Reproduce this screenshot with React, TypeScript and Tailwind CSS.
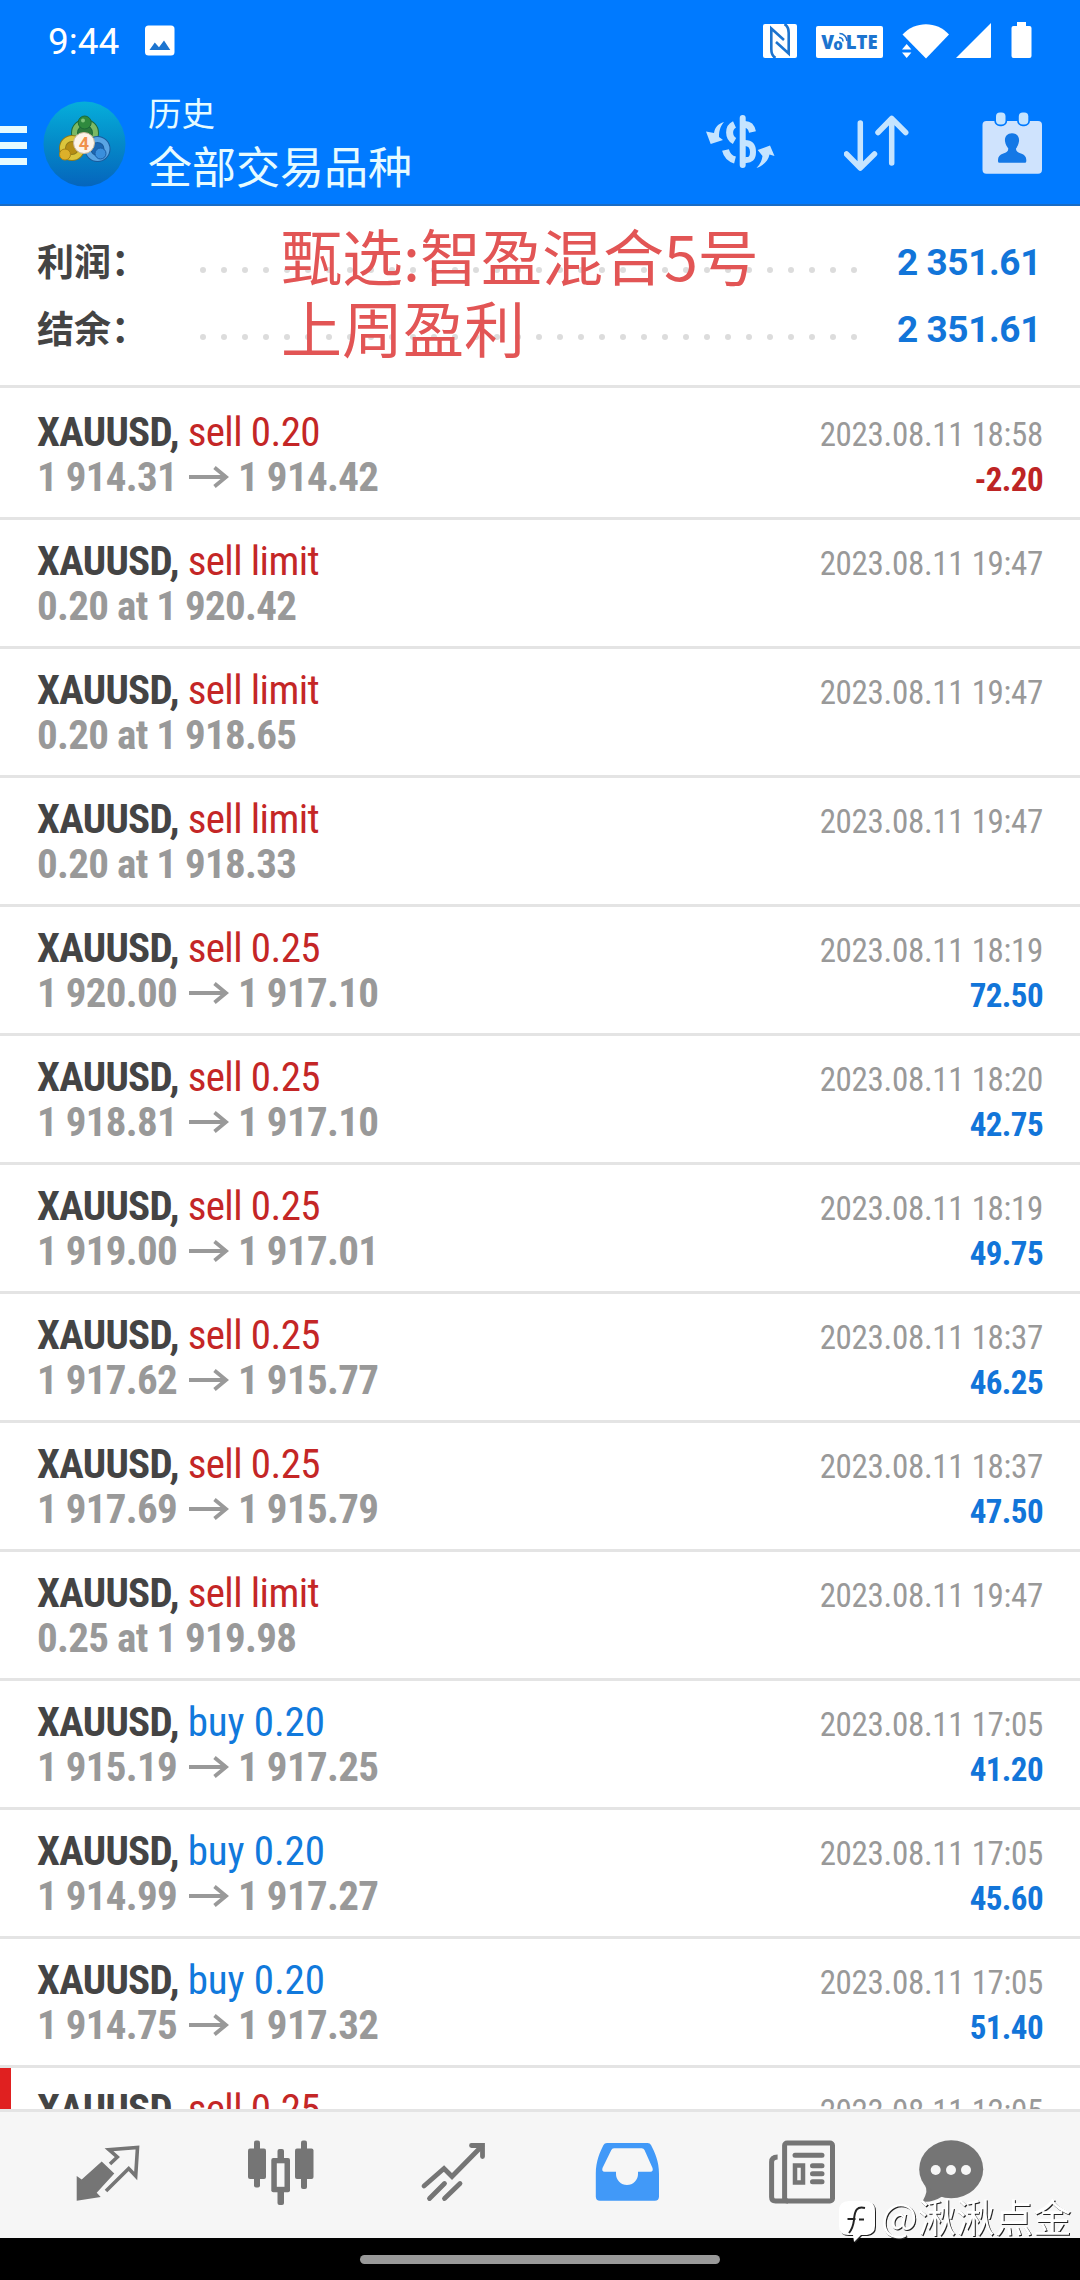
import { clsx } from 'clsx';

// ─── Data ─────────────────────────────────────────────────────────────────────
interface Deal {
  side: 'sell' | 'buy';
  volume: string;
  time: string;
  open?: string;
  close?: string;
  pending?: string;
  profit?: string;
  flagged?: boolean;
}

const DEALS: Deal[] = [
  { side: 'sell', volume: '0.20', open: '1 914.31', close: '1 914.42', time: '18:58', profit: '-2.20' },
  { side: 'sell', volume: 'limit', pending: '0.20 at 1 920.42', time: '19:47' },
  { side: 'sell', volume: 'limit', pending: '0.20 at 1 918.65', time: '19:47' },
  { side: 'sell', volume: 'limit', pending: '0.20 at 1 918.33', time: '19:47' },
  { side: 'sell', volume: '0.25', open: '1 920.00', close: '1 917.10', time: '18:19', profit: '72.50' },
  { side: 'sell', volume: '0.25', open: '1 918.81', close: '1 917.10', time: '18:20', profit: '42.75' },
  { side: 'sell', volume: '0.25', open: '1 919.00', close: '1 917.01', time: '18:19', profit: '49.75' },
  { side: 'sell', volume: '0.25', open: '1 917.62', close: '1 915.77', time: '18:37', profit: '46.25' },
  { side: 'sell', volume: '0.25', open: '1 917.69', close: '1 915.79', time: '18:37', profit: '47.50' },
  { side: 'sell', volume: 'limit', pending: '0.25 at 1 919.98', time: '19:47' },
  { side: 'buy', volume: '0.20', open: '1 915.19', close: '1 917.25', time: '17:05', profit: '41.20' },
  { side: 'buy', volume: '0.20', open: '1 914.99', close: '1 917.27', time: '17:05', profit: '45.60' },
  { side: 'buy', volume: '0.20', open: '1 914.75', close: '1 917.32', time: '17:05', profit: '51.40' },
  { side: 'sell', volume: '0.25', time: '12:05', flagged: true },
];

// ─── Status Bar ───────────────────────────────────────────────────────────────
function StatusBar() {
  return (
    <div className="flex h-20 items-start pl-[48px] pr-[48px] text-white">
      <span className="mt-5 font-['Roboto',sans-serif] text-[37px] leading-[44px]">9:44</span>
      <svg className="mt-[25px] ml-[26px]" width="30" height="31" viewBox="0 0 30 31">
        <rect x="0" y="0.5" width="29.5" height="30" rx="3.5" fill="#fff" />
        <path d="M4.5 25 9.8 17.5l4.2 4.8 5-6.8L25.300 25z" fill="#1c74cf" />
      </svg>

      <div className="mt-[22px] ml-auto flex items-start">
        <svg className="mt-[2px]" width="34" height="34" viewBox="0 0 34 34">
          <rect width="34" height="34" rx="2" fill="#fff" />
          <g fill="none" stroke="#1c74cf" strokeWidth="2.6">
            <path d="M12.500 34C9 32 8.300 29 8.300 25V4.500L21 16" />
            <path d="M21.500 0c3.500 2 4.200 5 4.200 9v20.500L13 18" />
          </g>
        </svg>
        <div className="mt-[4px] ml-[19px] flex h-8 w-[67px] items-center justify-center rounded-[2px] bg-white font-['Open_Sans',sans-serif] text-[18.500px] font-extrabold text-[#1c74cf]">
          <span>V</span>
          <span className="relative -ml-px text-[15px]">
            <span className="relative top-[2px]">o</span>
            <svg className="absolute -right-[5px] top-[1px]" width="10" height="10" viewBox="0 0 10 10" fill="none" stroke="#1c74cf" strokeWidth="1.600">
              <path d="M1 5.500a4 4 0 0 1 4 4M1.500 1.500a7.500 7.500 0 0 1 7.500 7.500" />
            </svg>
          </span>
          <span className="ml-[3px]">LTE</span>
        </div>
        <svg className="mt-[2px] ml-[18px]" width="48" height="35" viewBox="0 0 48 35" fill="#fff">
          <path d="M1.500 10.500C14-3.300 36-3.300 48 10.500L25 34.500z" />
          <path d="M1 25.500 5.700 20l4.700 5.500zM1 28.500l4.700 5.500 4.700-5.500z" stroke="#007aff" strokeWidth="1" paintOrder="stroke" />
        </svg>
        <svg className="mt-[1px] ml-[7px]" width="36" height="36" viewBox="0 0 36 36" fill="#fff">
          <path d="M35 0v34q0 1-1 1H0z" />
        </svg>
        <svg className="ml-[19px]" width="21" height="36" viewBox="0 0 21 36" fill="#fff">
          <path d="M6 0h9v4h3.500q2 0 2 2v28q0 2-2 2h-16q-2 0-2-2V6q0-2 2-2H6z" />
        </svg>
      </div>
    </div>
  );
}

// ─── Header ───────────────────────────────────────────────────────────────────
function Avatar() {
  return (
    <svg width="84" height="86" viewBox="0 0 84 86">
      <defs>
        <linearGradient id="sea" x1="0" y1="0" x2="0" y2="1">
          <stop offset="0" stopColor="#06aedb" />
          <stop offset="0.5" stopColor="#0489c8" />
          <stop offset="1" stopColor="#0565bd" />
        </linearGradient>
      </defs>
      <ellipse cx="41.500" cy="43" rx="41" ry="42.500" fill="url(#sea)" />
      <circle cx="42" cy="32" r="10.500" fill="#2d7a3c" stroke="#1f6b3a" strokeWidth="7" />
      <circle cx="42" cy="32" r="10.500" fill="none" stroke="#7cb965" strokeWidth="5" />
      <circle cx="29" cy="47" r="9.500" fill="#b58d14" stroke="#8f7a1a" strokeWidth="7" />
      <circle cx="29" cy="47" r="9.500" fill="none" stroke="#dcc53c" strokeWidth="5" />
      <circle cx="54.500" cy="48" r="9.500" fill="#1c68b4" stroke="#1a5b9c" strokeWidth="7" />
      <circle cx="54.500" cy="48" r="9.500" fill="none" stroke="#5aa5e4" strokeWidth="5" />
      <circle cx="41.700" cy="21.500" r="6.500" fill="#2f8a3e" stroke="#1c6a38" strokeWidth="1" />
      <circle cx="40" cy="19.500" r="2" fill="#7cc47a" />
      <circle cx="22" cy="53.500" r="5.500" fill="#dcb02a" stroke="#a98212" strokeWidth="1" />
      <circle cx="57.500" cy="52.500" r="5.500" fill="#3a8fdc" stroke="#1a5da6" strokeWidth="1" />
      <circle cx="41" cy="42" r="10.500" fill="#fbf3ea" stroke="#c9b79a" strokeWidth="1" />
      <text x="41" y="48.500" textAnchor="middle" fontFamily="Roboto, sans-serif" fontSize="18" fontWeight="700" fill="#f0904a">4</text>
    </svg>
  );
}

function Header() {
  return (
    <header className="h-[206px] shrink-0 border-b-2 border-[#1a6cc4] bg-[#007aff]">
      <StatusBar />
      <div className="flex items-start text-[#e6fbff]">
        <div className="mt-[46px] flex w-[27px] flex-col gap-[9px]">
          <span className="h-[7px] bg-[#e6fbff]" />
          <span className="h-[7px] bg-[#e6fbff]" />
          <span className="h-[7px] bg-[#e6fbff]" />
        </div>
        <div className="mt-[21px] ml-4">
          <Avatar />
        </div>
        <div className="mt-[10px] ml-[21px] font-['Noto_Sans_CJK_SC',sans-serif]">
          <p className="text-[33.500px] leading-[44px]">历史</p>
          <p className="mt-[3px] text-[44px] leading-[56px]">全部交易品种</p>
        </div>

        <div className="mt-8 ml-auto mr-[36px] flex text-[#c5e4ff]">
          <svg width="70" height="62" viewBox="0 0 70 62" fill="none" stroke="currentColor" strokeLinecap="round" strokeWidth="6">
            <path d="M36.700 6v47" />
            <g strokeLinecap="butt">
              <path d="M39 12.500q6 0 7.500 7.500M28.500 12.500c-6.500 3-6.500 13 0 16.500M19.500 38q2 8 9.500 10" strokeWidth="7" />
              <path d="M39 31q8 0 8 9t-8 8" />
            </g>
            <path stroke="none" fill="currentColor" d="M18 10C12 12 9 15 8 21L0 19.500 4.700 32 17 28l-4-3c0-6 1-10 5-15zM50.500 56c4-4 5.500-8 6-12l-4.800-6L64 33.500 68.500 44l-5-1.500c-1 6-6 11-13 13.500z" />
          </svg>
          <svg className="ml-[68px]" width="66" height="62" viewBox="0 0 66 62" fill="none" stroke="currentColor" strokeLinecap="round" strokeLinejoin="round" strokeWidth="5.500">
            <path d="M16.300 11v44.500M2.500 42l13.800 14L30.500 42" />
            <path d="M47.700 51V6.500M34 20.500 47.700 6.500l14 14" />
          </svg>
          <svg className="ml-[72px]" width="62" height="62" viewBox="0 0 62 62">
            <rect x="0.500" y="9" width="59.500" height="52.700" rx="4" fill="#cfe3fd" />
            <rect x="14" y="0.500" width="9.500" height="12" rx="4" fill="#c5e4ff" stroke="#007aff" strokeWidth="3.500" paintOrder="stroke" />
            <rect x="36.800" y="0.500" width="9.500" height="12" rx="4" fill="#c5e4ff" stroke="#007aff" strokeWidth="3.500" paintOrder="stroke" />
            <path d="M30 21.300c5 0 7.500 3.500 7 8-.5 4-2 5.700-3 7.200 0 3 2 4 5 5 3.500 1.200 5.300 3 5.300 6.500v1.200q0 1.500-1.500 1.500H17.500q-1.500 0-1.500-1.500V48c0-3.500 1.800-5.300 5.300-6.500 3-1 5-2 5-5-1-1.500-2.800-3.200-3.300-7.200-.5-4.500 2-8 7-8z" fill="#1478e6" />
          </svg>
        </div>
      </div>
    </header>
  );
}

// ─── Summary ──────────────────────────────────────────────────────────────────
function SummaryRow({ label, value }: { label: string; value: string }) {
  return (
    <div className="flex h-[67px] items-center pr-[39px] pl-[37px]">
      <span className="-mt-[2px] w-[163px] font-['Noto_Sans_CJK_SC',sans-serif] text-[37px] font-bold text-[#444]">{label}</span>
      <div className="mt-4 flex w-[657px] justify-between">
        {Array.from({ length: 32 }, (_, i) => (
          <span key={i} className="size-[6px] rounded-full bg-[#dcdcdc]" />
        ))}
      </div>
      <span className="mt-[3px] ml-auto font-['Roboto',sans-serif] text-[37px] font-bold tracking-[-0.4px] text-[#1275d9]">{value}</span>
    </div>
  );
}

function Summary() {
  return (
    <section className="relative h-[182px] shrink-0 border-b-[3px] border-[#e4e4e4] pt-[22px]">
      <SummaryRow label="利润：" value="2 351.61" />
      <SummaryRow label="结余：" value="2 351.61" />
      <p className="absolute top-[13px] left-[281px] font-['Noto_Sans_CJK_SC',sans-serif] text-[61px] leading-[72px] whitespace-nowrap text-[#e25555]">
        甄选:智盈混合5号
        <br />
        上周盈利
      </p>
    </section>
  );
}

// ─── Deal Row ─────────────────────────────────────────────────────────────────
function DealRow({ deal }: { deal: Deal }) {
  return (
    <li
      className={clsx(
        'flex h-[129px] shrink-0 justify-between border-b-[3px] border-[#e4e4e4] pt-[19px] pr-[37px]',
        deal.flagged ? 'border-l-[11px] border-l-[#e02020] pl-[26px]' : 'pl-[37px]',
      )}
    >
      <div className="text-[41px] leading-[45px] whitespace-nowrap">
        <p>
          <span className="font-bold tracking-[-0.7px] text-[#444]">XAUUSD, </span>
          <span className={deal.side === 'sell' ? 'tracking-[-0.6px] text-[#c42626]' : 'tracking-[-0.1px] text-[#1179dc]'}>
            {deal.side} {deal.volume}
          </span>
        </p>
        <p className="flex items-center font-bold tracking-[-0.7px] text-[#999]">
          {deal.pending}
          {deal.open && (
            <>
              <span>{deal.open}</span>
              <svg className="-mt-[2px] mr-[9px] ml-[12px]" width="40" height="22" viewBox="0 0 40 22" fill="none" stroke="currentColor" strokeWidth="3.800">
                <path d="M0 11h37M25.500 1.500 37 11 25.500 20.500" />
              </svg>
              <span>{deal.close}</span>
            </>
          )}
        </p>
      </div>
      <div className="pt-[5px] text-right text-[33px] whitespace-nowrap">
        <p className="leading-[40px] tracking-[-0.3px] text-[#999]">2023.08.11 {deal.time}</p>
        {deal.profit && (
          <p className={clsx('mt-[5px] leading-[40px] font-bold tracking-[-0.6px]', deal.profit.startsWith('-') ? 'text-[#bd2424]' : 'text-[#1275d9]')}>
            {deal.profit}
          </p>
        )}
      </div>
    </li>
  );
}

// ─── Bottom Navigation ────────────────────────────────────────────────────────
function BottomNav() {
  return (
    <nav className="flex h-[129px] shrink-0 border-t-[3px] border-[#e4e4e4] bg-[#f6f6f6] pt-7 pl-[75px] text-[#757575]">
      <svg width="66" height="66" viewBox="0 0 66 66">
        <path d="M1.700 36 6.700 39.500 26.700 21.500 39.300 33.500 21.700 52.700 25.700 57 1.700 60.700z" fill="currentColor" />
        <path d="M35 24 42.300 17 34 9.700 62.500 7.500 60.700 36 53.700 28.500 31 51" fill="none" stroke="currentColor" strokeWidth="3.600" />
      </svg>
      <svg className="ml-[107px]" width="66" height="66" viewBox="0 0 66 66" fill="currentColor">
        <rect x="0" y="8.500" width="18" height="30.500" rx="2" />
        <rect x="6" y="0.500" width="6" height="47" rx="2" />
        <rect x="47" y="8.500" width="18.500" height="30.500" rx="2" />
        <rect x="53" y="0.500" width="6" height="48.500" rx="2" />
        <rect x="29.500" y="9" width="6.500" height="56" rx="2" />
        <rect x="23.300" y="18" width="18.700" height="34.300" rx="2" />
        <rect x="28.800" y="23.300" width="7.700" height="23.500" fill="#f6f6f6" />
      </svg>
      <svg className="ml-[106px]" width="66" height="66" viewBox="0 0 66 66" fill="none" stroke="currentColor" strokeWidth="4.800" strokeLinecap="round">
        <path d="M4 46 24 28.500l8 8L62 6" />
        <path d="M51.500 5.500H62.500V16.500" />
        <path d="M24.500 43.500 9.500 58.500M40 43.500l-15.500 15" />
      </svg>
      <svg className="ml-[108px] text-[#4199f8]" width="66" height="66" viewBox="0 0 66 66">
        <path
          fill="currentColor"
          fillRule="evenodd"
          d="M13 3h40.500q2.500 0 3.500 2c4 8 8 16 8 29v22.500q0 4.200-4.200 4.200H6q-4.200 0-4.200-4.200V34C1.800 21 6 12 9.500 5q1-2 3.500-2zM20 8.300q-2 0-2.800 2L8.500 28q-1 3.700 2 3.700h11.500V34a11 11 0 0 0 22 0v-2.300h12.500q3 0 2-3.700L50.500 10q-.8-1.700-2.800-1.700z"
        />
      </svg>
      <svg className="ml-[108px]" width="68" height="66" viewBox="0 0 68 66" fill="none" stroke="currentColor" strokeWidth="5">
        <rect x="16.600" y="3" width="47.900" height="58" rx="2.500" />
        <path d="M9.600 17Q3.600 17 3.600 22V57q0 4 4 4H20" />
        <path d="M27 15.300h27M44.500 25.700h9.500M44.500 33.700h9.500M44.500 41.700h9.500" strokeLinecap="round" />
        <rect x="27" y="25.500" width="8" height="17" strokeWidth="4.500" />
      </svg>
      <svg className="ml-[82px]" width="66" height="66" viewBox="0 0 66 66" fill="currentColor">
        <ellipse cx="33.200" cy="29.200" rx="32" ry="29" />
        <path d="M7 46q4 4-2.500 15.500Q14 63 25 56z" />
        <g fill="#f6f6f6">
          <circle cx="17.700" cy="30" r="5" />
          <circle cx="33" cy="30" r="5" />
          <circle cx="48" cy="30" r="5" />
        </g>
      </svg>
    </nav>
  );
}

function Watermark() {
  return (
    <div className="absolute top-[2189px] left-[838px] flex items-start text-white drop-shadow-[1.5px_1.5px_0_#222]">
      <svg width="42" height="56" viewBox="0 0 42 56">
        <path d="M11 12h17q9 0 9 10v15q0 8-8 9h-6l-7 7-1-7h-5Q1 46 1 37V22Q1 12 11 12z" fill="#fff" />
        <path d="M27 19c-8-2-10 2-11 11M9.500 30h8M21 30.500h5M16 31Q15 39 11 44" fill="none" stroke="#222" strokeWidth="2" />
      </svg>
      <span className="ml-px font-['Noto_Sans_CJK_SC',sans-serif] text-[38.500px] leading-[52px]">@湫湫点金</span>
    </div>
  );
}

// ─── Screen ───────────────────────────────────────────────────────────────────
export default function App() {
  return (
    <div className="relative flex h-[2280px] w-[1080px] flex-col overflow-hidden bg-white font-['Roboto_Condensed','Roboto',sans-serif]">
      <Header />
      <Summary />
      <ul className="flex min-h-0 flex-1 flex-col overflow-hidden pt-[3px]">
        {DEALS.map((deal, i) => (
          <DealRow key={i} deal={deal} />
        ))}
      </ul>
      <BottomNav />
      <div className="flex h-[42px] shrink-0 justify-center bg-black pt-[17px]">
        <span className="h-[9px] w-[360px] rounded-full bg-[#999]" />
      </div>
      <Watermark />
    </div>
  );
}
